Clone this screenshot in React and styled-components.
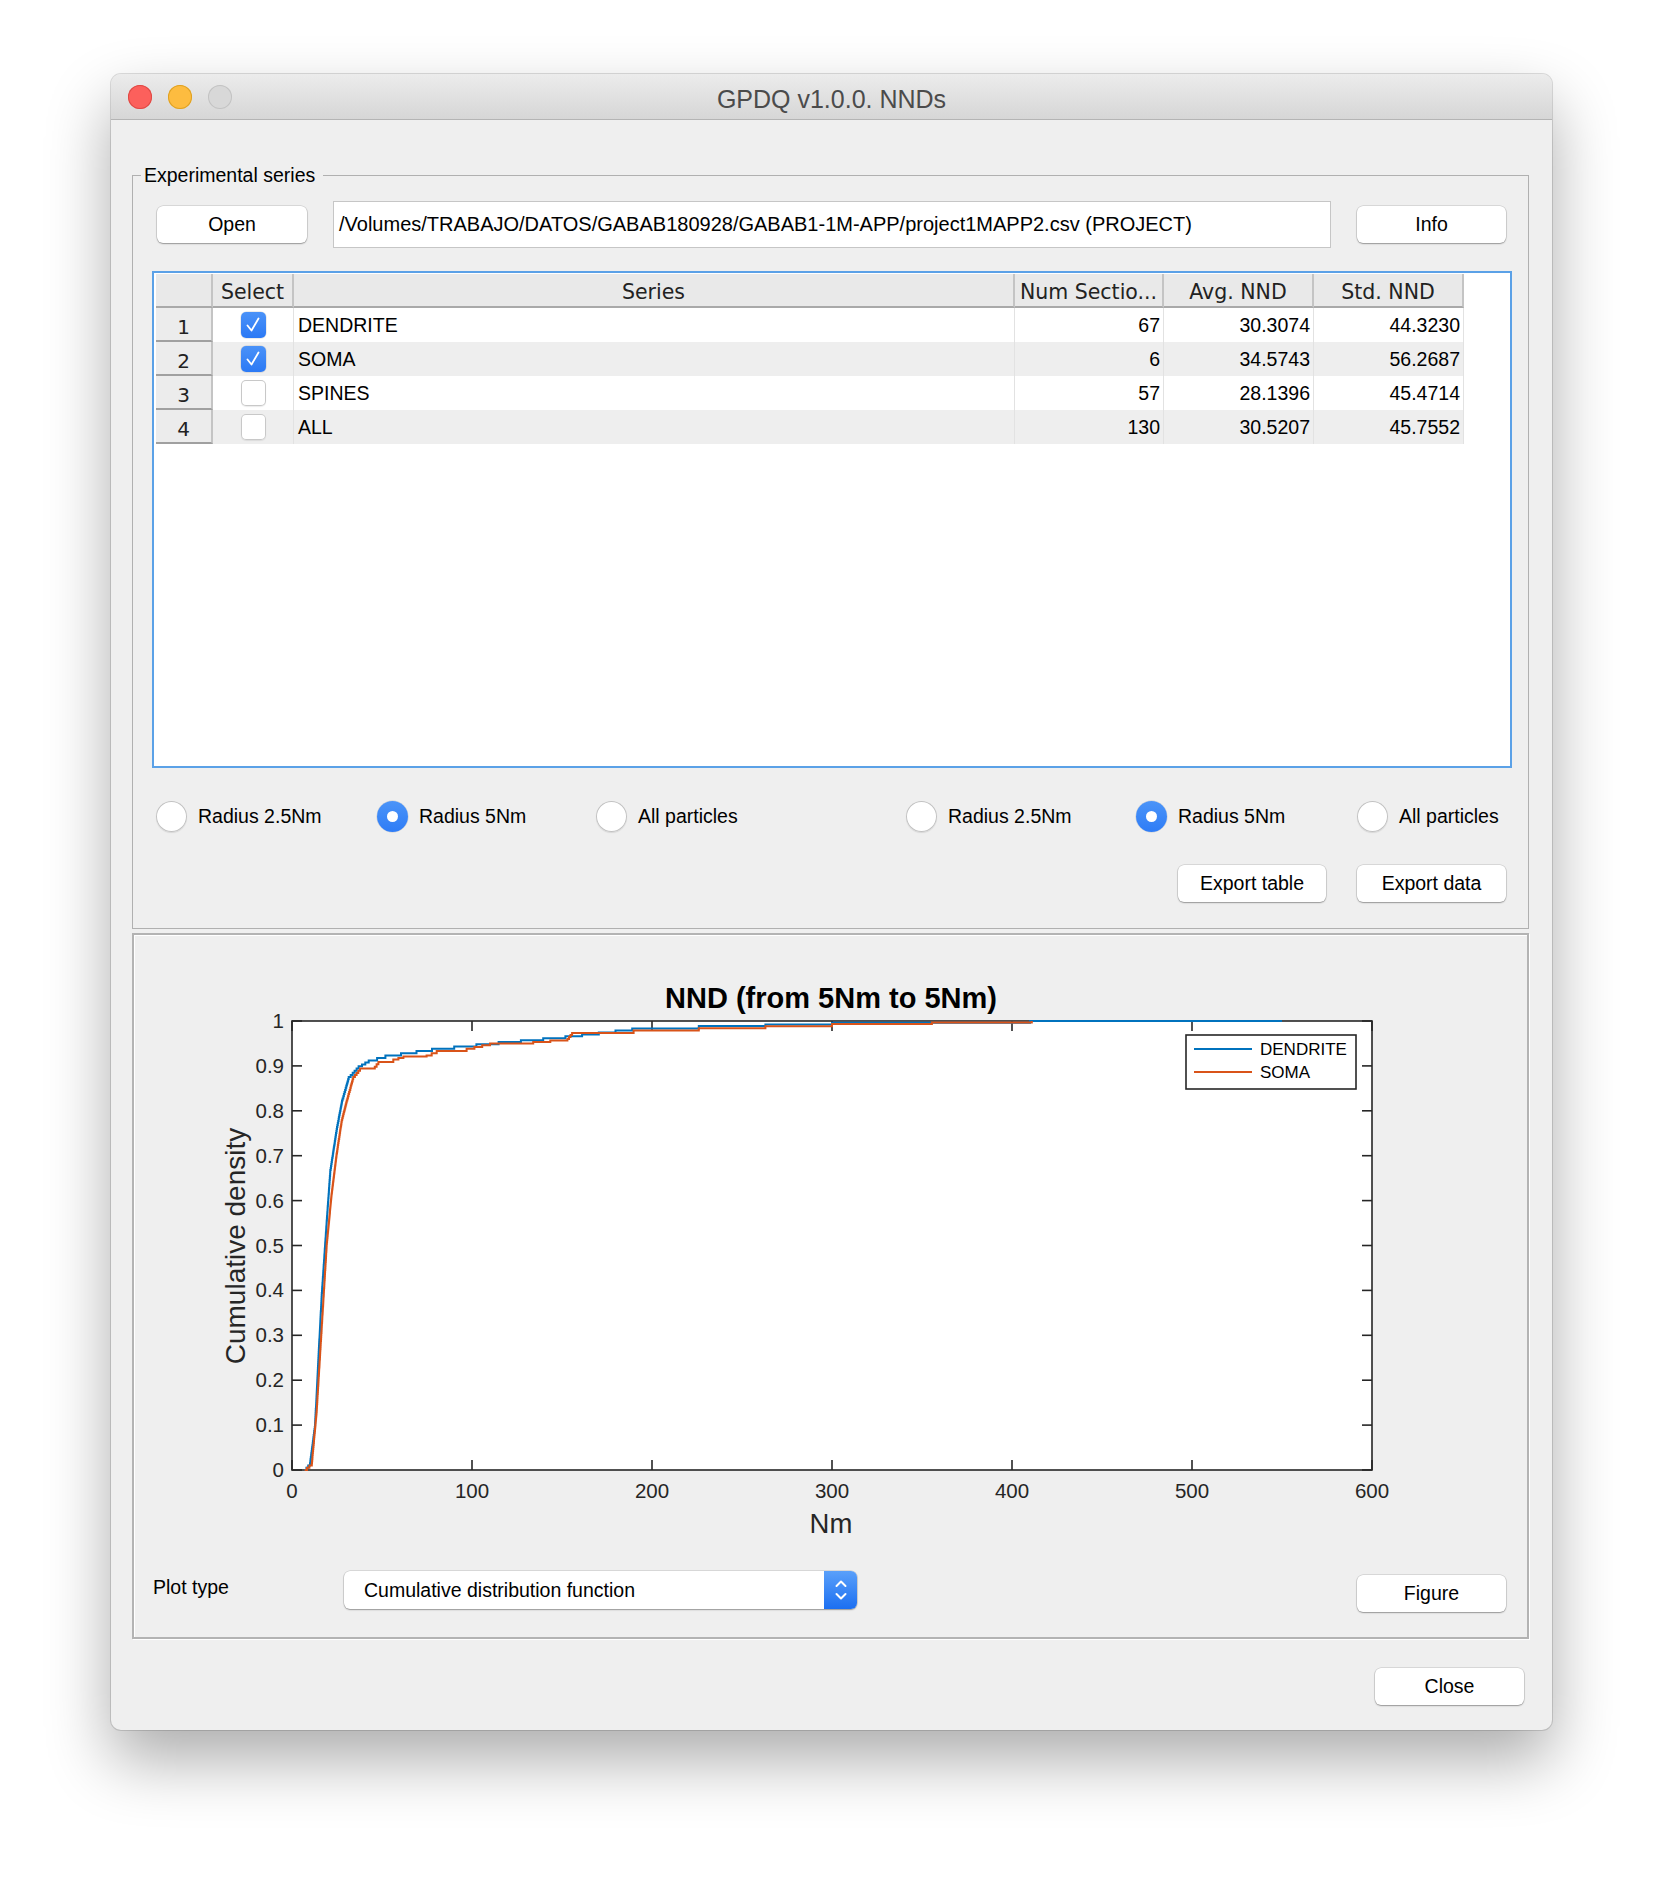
import React from "react";
import styled, { createGlobalStyle } from "styled-components";

const GlobalStyle = createGlobalStyle`
  html, body {
    margin: 0;
    padding: 0;
    background: #ffffff;
  }
  body {
    font-family: "Liberation Sans", Arial, sans-serif;
    color: #000;
  }
  * {
    box-sizing: border-box;
  }
`;

// 데이터
const series = [
  { id: 1, name: "DENDRITE", checked: true, num: 67, avg: "30.3074", std: "44.3230" },
  { id: 2, name: "SOMA", checked: true, num: 6, avg: "34.5743", std: "56.2687" },
  { id: 3, name: "SPINES", checked: false, num: 57, avg: "28.1396", std: "45.4714" },
  { id: 4, name: "ALL", checked: false, num: 130, avg: "30.5207", std: "45.7552" },
];

const radios = [
  { label: "Radius 2.5Nm", on: false, w: 221 },
  { label: "Radius 5Nm", on: true, w: 219 },
  { label: "All particles", on: false, w: 310 },
  { label: "Radius 2.5Nm", on: false, w: 230 },
  { label: "Radius 5Nm", on: true, w: 221 },
  { label: "All particles", on: false, w: 0 },
];

const dendrite = [
  [7, 0], [10, 0.015], [12.8, 0.1], [14.6, 0.245], [16.5, 0.39], [19.3, 0.556],
  [21.3, 0.668], [25, 0.764], [27.8, 0.823], [31.5, 0.875], [37, 0.899],
  [42.6, 0.912], [51.9, 0.923], [77.8, 0.938], [114.8, 0.953], [151.9, 0.966],
  [189, 0.983], [226, 0.989], [300, 0.996], [410, 1.0], [550, 1.0],
];

const soma = [
  [7, 0], [11, 0.015], [13.7, 0.133], [16.5, 0.319], [19.3, 0.504], [22, 0.616],
  [24.8, 0.705], [27.6, 0.779], [30.4, 0.823], [34, 0.875], [37.8, 0.894],
  [46, 0.898], [48, 0.909], [56.3, 0.914], [61.9, 0.921], [74.8, 0.923],
  [80.4, 0.933], [97, 0.938], [110, 0.95], [134, 0.953], [153, 0.96],
  [155.6, 0.973], [189.8, 0.979], [226, 0.984], [300, 0.993], [411, 1.0],
];

// 축 좌표
const AX = { left: 158, right: 1238, top: 86, bottom: 535 };
const sx = (v) => AX.left + (v / 600) * (AX.right - AX.left);
const sy = (v) => AX.bottom - v * (AX.bottom - AX.top);

const stairs = (knots) => {
  let d = `M${sx(knots[0][0]).toFixed(1)},${sy(knots[0][1]).toFixed(1)}`;
  for (let i = 1; i < knots.length; i++) {
    const [x0, y0] = knots[i - 1];
    const [x1, y1] = knots[i];
    const n = Math.max(1, Math.round((y1 - y0) * 220));
    for (let k = 1; k <= n; k++) {
      const x = x0 + ((x1 - x0) * k) / n;
      const y = y0 + ((y1 - y0) * k) / n;
      d += `H${sx(x).toFixed(1)}V${sy(y).toFixed(1)}`;
    }
  }
  return d;
};

const yTicks = [0, 0.1, 0.2, 0.3, 0.4, 0.5, 0.6, 0.7, 0.8, 0.9, 1];
const xTicks = [0, 100, 200, 300, 400, 500, 600];

const Plot = () => {
  return (
    <PlotSvg width="1393" height="625" viewBox="0 0 1393 625">
      <rect
        x={AX.left}
        y={AX.top}
        width={AX.right - AX.left}
        height={AX.bottom - AX.top}
        fill="#ffffff"
        stroke="#262626"
        strokeWidth="1.6"
      />
      {yTicks.map((t) => (
        <g key={"y" + t}>
          <line x1={AX.left} x2={AX.left + 10} y1={sy(t)} y2={sy(t)} stroke="#262626" strokeWidth="1.6" />
          <line x1={AX.right - 10} x2={AX.right} y1={sy(t)} y2={sy(t)} stroke="#262626" strokeWidth="1.6" />
          <text x={AX.left - 8} y={sy(t) + 7} textAnchor="end" fontSize="20.5" fill="#262626">
            {t}
          </text>
        </g>
      ))}
      {xTicks.map((t) => (
        <g key={"x" + t}>
          <line x1={sx(t)} x2={sx(t)} y1={AX.bottom} y2={AX.bottom - 10} stroke="#262626" strokeWidth="1.6" />
          <line x1={sx(t)} x2={sx(t)} y1={AX.top} y2={AX.top + 10} stroke="#262626" strokeWidth="1.6" />
          <text x={sx(t)} y={563} textAnchor="middle" fontSize="20.5" fill="#262626">
            {t}
          </text>
        </g>
      ))}
      <path d={stairs(dendrite)} fill="none" stroke="#0072bd" strokeWidth="2" />
      <path d={stairs(soma)} fill="none" stroke="#d95319" strokeWidth="2" />
      <text x={697} y={73} textAnchor="middle" fontSize="29" fontWeight="bold" fill="#000">
        NND (from 5Nm to 5Nm)
      </text>
      <text x={697} y={598} textAnchor="middle" fontSize="27.5" fill="#262626">
        Nm
      </text>
      <text
        x={0}
        y={0}
        transform="translate(111 311) rotate(-90)"
        textAnchor="middle"
        fontSize="28"
        fill="#262626"
      >
        Cumulative density
      </text>
      {/* 범례 */}
      <rect x={1052} y={100} width={170} height={54} fill="#ffffff" stroke="#262626" strokeWidth="1.6" />
      <line x1={1060} x2={1118} y1={114} y2={114} stroke="#0072bd" strokeWidth="2" />
      <line x1={1060} x2={1118} y1={137} y2={137} stroke="#d95319" strokeWidth="2" />
      <text x={1126} y={120} fontSize="17" fill="#000">DENDRITE</text>
      <text x={1126} y={143} fontSize="17" fill="#000">SOMA</text>
    </PlotSvg>
  );
};

const CheckBox = ({ checked }) => (
  <Check $on={checked}>
    {checked && (
      <svg width="20" height="20" viewBox="0 0 20 20">
        <path d="M4.5 10.5 L8.5 15.5 L15.5 3.5" fill="none" stroke="#ffffff" strokeWidth="1.8" strokeLinecap="round" strokeLinejoin="round" />
      </svg>
    )}
  </Check>
);

const App = () => {
  return (
    <Page>
      <GlobalStyle />
      <Window>
        <TitleBar>
          <Lights>
            <Light $color="#fc605c" $border="#de4a45" />
            <Light $color="#fdbc40" $border="#dea123" />
            <Light $color="#d8d8d8" $border="#c3c3c3" />
          </Lights>
          <WindowTitle>GPDQ v1.0.0. NNDs</WindowTitle>
        </TitleBar>

        <Body>
          <Group>
            <GroupTitle>Experimental series</GroupTitle>

            <TopRow>
              <Button $w={150}>Open</Button>
              <PathField>
                /Volumes/TRABAJO/DATOS/GABAB180928/GABAB1-1M-APP/project1MAPP2.csv (PROJECT)
              </PathField>
              <Button $w={149}>Info</Button>
            </TopRow>

            <TableBox>
              <TableRow>
                <HeadCell />
                <HeadCell>Select</HeadCell>
                <HeadCell>Series</HeadCell>
                <HeadCell>Num Sectio...</HeadCell>
                <HeadCell>Avg. NND</HeadCell>
                <HeadCell>Std. NND</HeadCell>
              </TableRow>
              {series.map((s, i) => (
                <TableRow key={s.id} $odd={i % 2 === 1}>
                  <RowHead>{s.id}</RowHead>
                  <CheckCell>
                    <CheckBox checked={s.checked} />
                  </CheckCell>
                  <Cell>{s.name}</Cell>
                  <Cell $right>{s.num}</Cell>
                  <Cell $right>{s.avg}</Cell>
                  <Cell $right>{s.std}</Cell>
                </TableRow>
              ))}
            </TableBox>

            <RadioRow>
              {radios.map((r, i) => (
                <RadioItem key={i} $w={r.w}>
                  <RadioCircle $on={r.on} />
                  <RadioLabel>{r.label}</RadioLabel>
                </RadioItem>
              ))}
            </RadioRow>

            <ExportRow>
              <Button $w={148}>Export table</Button>
              <Button $w={149}>Export data</Button>
            </ExportRow>
          </Group>

          <PlotPanel>
            <Plot />
            <ControlRow>
              <PlotTypeLabel>Plot type</PlotTypeLabel>
              <SelectBox>
                <SelectText>Cumulative distribution function</SelectText>
                <Stepper>
                  <svg width="16" height="26" viewBox="0 0 16 26">
                    <path d="M3.5 9 L8 4.5 L12.5 9" fill="none" stroke="#fff" strokeWidth="2" strokeLinecap="round" strokeLinejoin="round" />
                    <path d="M3.5 17 L8 21.5 L12.5 17" fill="none" stroke="#fff" strokeWidth="2" strokeLinecap="round" strokeLinejoin="round" />
                  </svg>
                </Stepper>
              </SelectBox>
              <Spacer />
              <Button $w={149} $mt={4}>Figure</Button>
            </ControlRow>
          </PlotPanel>

          <CloseRow>
            <Button $w={149}>Close</Button>
          </CloseRow>
        </Body>
      </Window>
    </Page>
  );
};

export default App;

const Page = styled.div`
  width: 1664px;
  height: 1878px;
  padding: 74px 0 0 111px;
  background: #ffffff;
`;

const Window = styled.div`
  width: 1441px;
  height: 1656px;
  background: #efefef;
  border-radius: 10px;
  box-shadow: 0 30px 65px rgba(0, 0, 0, 0.33), 0 0 0 1px rgba(0, 0, 0, 0.13);
  display: flex;
  flex-direction: column;
  overflow: hidden;
`;

const TitleBar = styled.div`
  height: 46px;
  flex: none;
  display: flex;
  align-items: center;
  position: relative;
  background: linear-gradient(#ececec, #d6d6d6);
  border-bottom: 1px solid #b4b4b4;
`;

const Lights = styled.div`
  display: flex;
  gap: 16px;
  padding-left: 17px;
`;

const Light = styled.span`
  width: 24px;
  height: 24px;
  border-radius: 50%;
  background: ${(p) => p.$color};
  box-shadow: inset 0 0 0 1px ${(p) => p.$border};
`;

const WindowTitle = styled.div`
  position: absolute;
  left: 0;
  right: 0;
  top: 11px;
  text-align: center;
  font-size: 25px;
  color: #4b4b4b;
  pointer-events: none;
`;

const Body = styled.div`
  flex: 1;
  display: flex;
  flex-direction: column;
  padding: 44px 23px 0 21px;
`;

const Group = styled.fieldset`
  margin: 0;
  padding: 0 0 26px 0;
  min-width: 0;
  border: 1px solid #b0b0b0;
  display: flex;
  flex-direction: column;
`;

const GroupTitle = styled.legend`
  margin-left: 8px;
  padding: 0 8px 0 3px;
  font-size: 19.5px;
  line-height: 22px;
  color: #000;
`;

const TopRow = styled.div`
  display: flex;
  align-items: center;
  gap: 26px;
  margin-top: 15px;
  height: 47px;
  padding: 0 22px 0 24px;
`;

const Button = styled.div`
  width: ${(p) => p.$w}px;
  height: 37px;
  flex: none;
  margin-top: ${(p) => p.$mt || 0}px;
  background: #ffffff;
  border-radius: 6px;
  box-shadow: 0 0 0 0.5px rgba(0, 0, 0, 0.18), 0 1px 1.5px rgba(0, 0, 0, 0.3);
  display: flex;
  align-items: center;
  justify-content: center;
  font-size: 19.5px;
  color: #000;
`;

const PathField = styled.div`
  flex: 1;
  height: 47px;
  background: #ffffff;
  border: 1px solid #c6c6c6;
  display: flex;
  align-items: center;
  padding-left: 5px;
  font-size: 20px;
  white-space: nowrap;
  overflow: hidden;
`;

const TableBox = styled.div`
  margin: 23px 16px 0 19px;
  height: 497px;
  background: #ffffff;
  border: 2px solid #5ba1e7;
  padding: 1px 0 0 2px;
`;

const TableRow = styled.div`
  display: grid;
  grid-template-columns: 57px 81px 721px 149px 150px 150px;
  height: 34px;
  width: 1308px;
  background: ${(p) => (p.$odd ? "#eeeeee" : "#ffffff")};
`;

const HeadCell = styled.div`
  background: #e9e9e9;
  border-right: 2px solid #c4c4c4;
  border-bottom: 2px solid #a9a9a9;
  display: flex;
  align-items: center;
  justify-content: center;
  padding-top: 3px;
  font-family: "DejaVu Sans", "Liberation Sans", sans-serif;
  font-size: 20.5px;
  color: #222;
  white-space: nowrap;
  overflow: hidden;
`;

const RowHead = styled.div`
  background: #ececec;
  border-right: 2px solid #c4c4c4;
  border-bottom: 2px solid #a0a0a0;
  display: flex;
  align-items: flex-end;
  justify-content: center;
  padding-bottom: 1px;
  font-family: "DejaVu Sans", "Liberation Sans", sans-serif;
  font-size: 20px;
  color: #222;
`;

const CheckCell = styled.div`
  display: flex;
  align-items: center;
  justify-content: center;
  border-right: 1px solid #e2e2e2;
`;

const Check = styled.span`
  width: 25px;
  height: 26px;
  border-radius: 5px;
  display: flex;
  align-items: center;
  justify-content: center;
  background: ${(p) => (p.$on ? "linear-gradient(#4a92f8, #2b79f5)" : "#ffffff")};
  box-shadow: ${(p) =>
    p.$on
      ? "0 0 0 0.5px rgba(0,0,0,0.15)"
      : "inset 0 0 0 1px #c8c8c8, 0 1px 1px rgba(0,0,0,0.08)"};
`;

const Cell = styled.div`
  display: flex;
  align-items: center;
  justify-content: ${(p) => (p.$right ? "flex-end" : "flex-start")};
  padding: 0 3px 0 4px;
  border-right: 1px solid #e2e2e2;
  font-size: 19.5px;
  color: #000;
`;

const RadioRow = styled.div`
  display: flex;
  align-items: center;
  height: 31px;
  margin-top: 33px;
  padding-left: 23px;
`;

const RadioItem = styled.div`
  width: ${(p) => (p.$w ? `${p.$w}px` : "auto")};
  flex: none;
  display: flex;
  align-items: center;
  gap: 11px;
`;

const RadioCircle = styled.span`
  width: 31px;
  height: 31px;
  flex: none;
  border-radius: 50%;
  display: flex;
  align-items: center;
  justify-content: center;
  background: ${(p) => (p.$on ? "linear-gradient(#4b94f8, #2e7cf6)" : "#ffffff")};
  box-shadow: ${(p) =>
    p.$on
      ? "0 0 0 0.5px rgba(0,0,0,0.15)"
      : "inset 0 0 0 1px #c2c2c2, 0 1px 1px rgba(0,0,0,0.1)"};

  &::after {
    content: "";
    display: ${(p) => (p.$on ? "block" : "none")};
    width: 11px;
    height: 11px;
    border-radius: 50%;
    background: #ffffff;
  }
`;

const RadioLabel = styled.span`
  font-size: 19.5px;
  color: #000;
  white-space: nowrap;
`;

const ExportRow = styled.div`
  display: flex;
  justify-content: flex-end;
  gap: 31px;
  margin-top: 33px;
  padding-right: 22px;
`;

const PlotPanel = styled.div`
  margin-top: 4px;
  height: 706px;
  border: 2px solid #b3b3b3;
  box-shadow: 1px 1px 0 #ffffff, inset 1px 1px 0 #ffffff;
  display: flex;
  flex-direction: column;
`;

const PlotSvg = styled.svg`
  display: block;
  flex: none;
  font-family: "Liberation Sans", Arial, sans-serif;
`;

const ControlRow = styled.div`
  display: flex;
  align-items: flex-start;
  padding: 11px 21px 0 19px;
`;

const PlotTypeLabel = styled.div`
  width: 191px;
  flex: none;
  margin-top: 5px;
  font-size: 19.5px;
  line-height: 22px;
  color: #000;
`;

const SelectBox = styled.div`
  width: 513px;
  height: 38px;
  display: flex;
  background: #ffffff;
  border-radius: 6px;
  box-shadow: 0 0 0 0.5px rgba(0, 0, 0, 0.18), 0 1px 1.5px rgba(0, 0, 0, 0.3);
  overflow: hidden;
`;

const SelectText = styled.div`
  flex: 1;
  display: flex;
  align-items: center;
  padding-left: 20px;
  font-size: 19.5px;
  color: #000;
`;

const Stepper = styled.div`
  width: 33px;
  display: flex;
  align-items: center;
  justify-content: center;
  background: linear-gradient(#5aa0fa, #1c6ff1);
`;

const Spacer = styled.div`
  flex: 1;
`;

const CloseRow = styled.div`
  display: flex;
  justify-content: flex-end;
  margin-top: 29px;
  padding-right: 5px;
`;
